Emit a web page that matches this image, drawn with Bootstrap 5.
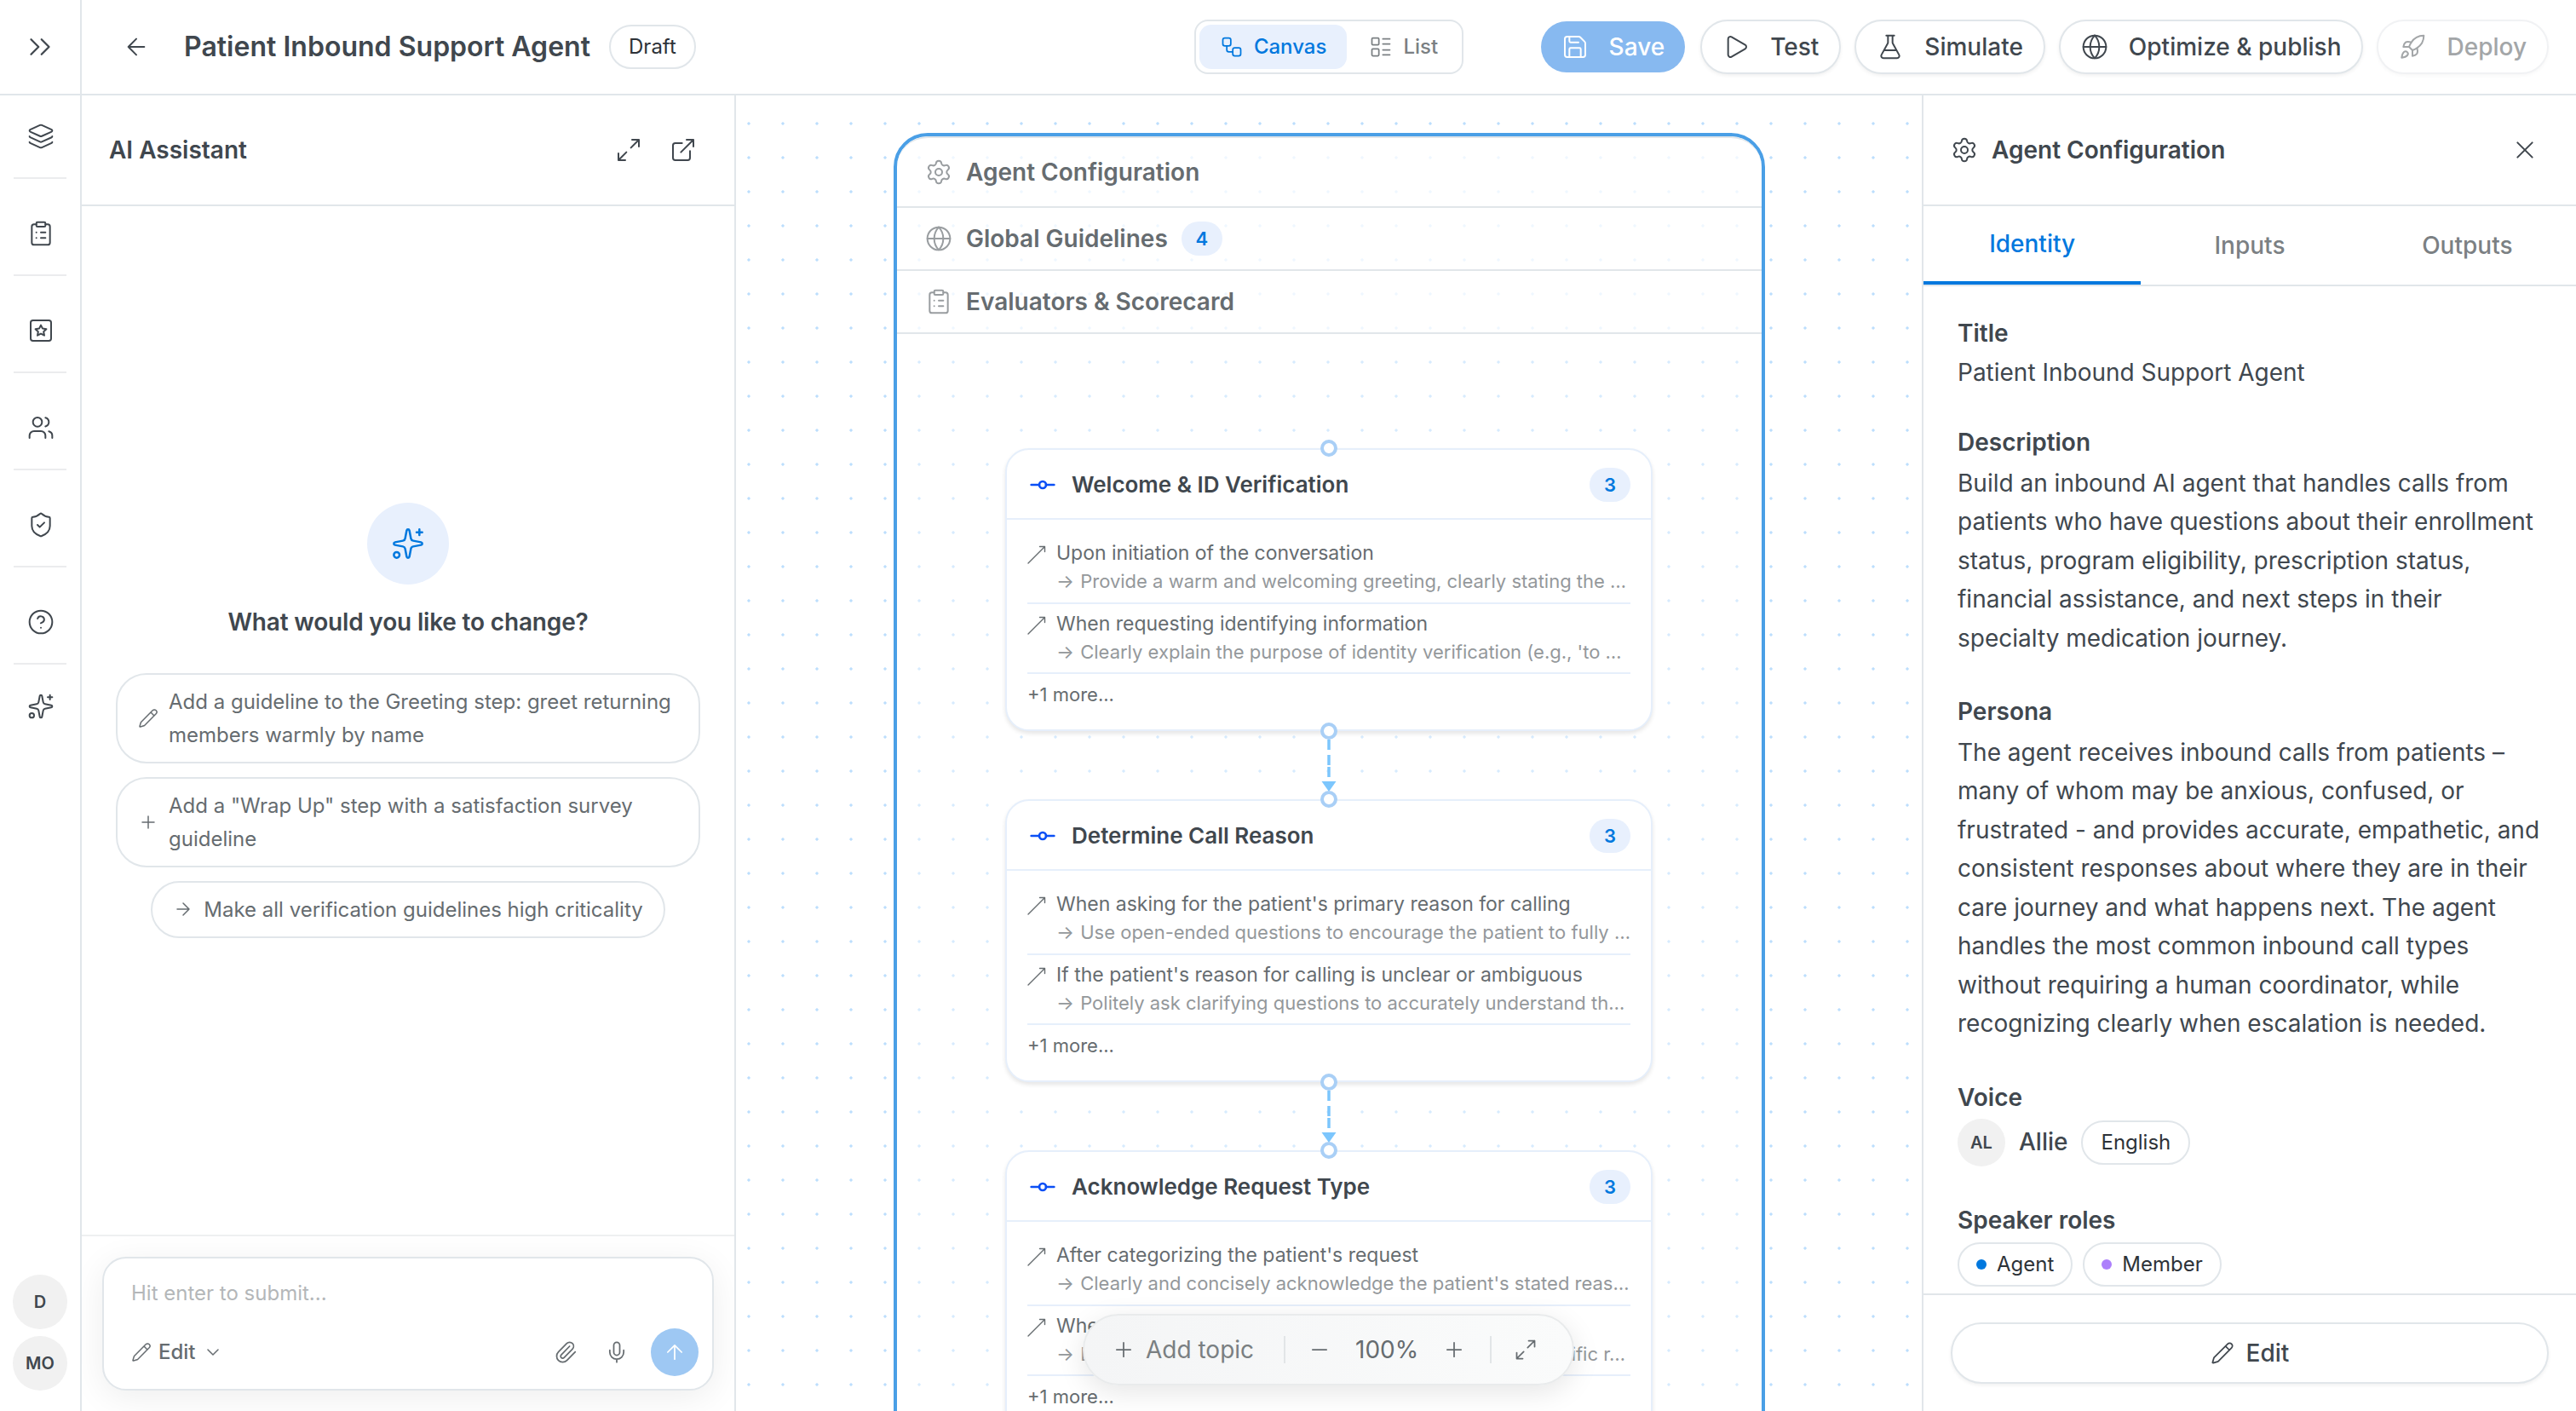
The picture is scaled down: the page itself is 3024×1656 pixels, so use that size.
<!DOCTYPE html>
<html lang="en">
<head>
  <meta charset="UTF-8">
  <meta name="viewport" content="width=device-width, initial-scale=1">
  <title>Patient Inbound Support Agent</title>
  <link href="https://cdn.jsdelivr.net/npm/bootstrap@5.3.2/dist/css/bootstrap.min.css" rel="stylesheet">
  <style>
    :root {
      --line: #e1e6ea;
      --ink: #40474e;
      --ink-2: #666c70;
      --ink-3: #94989b;
      --blue: #0078de;
      --blue-soft: #e8f0fd;
    }
    html, body { height: 100%; }
    body {
      font-family: Inter, "Liberation Sans", sans-serif;
      font-size: 28px;
      line-height: 45.5px;
      color: var(--ink);
      background: #fff;
      overflow: hidden;
    }
    .ico {
      width: 32px;
      height: 32px;
      flex: none;
      fill: none;
      stroke: currentColor;
      stroke-width: 1.5;
      stroke-linecap: round;
      stroke-linejoin: round;
    }
    .ico-24 { width: 24px; height: 24px; }
    .ico-28 { width: 28px; height: 28px; }
    .ico-40 { width: 40px; height: 40px; }
    .ico-toggle { width: 42px; height: 42px; stroke-width: 1.3; }

    /* top bar */
    .topbar { height: 112px; border-bottom: 2px solid var(--line); flex: none; }
    .topbar-toggle { width: 96px; border-right: 2px solid var(--line); }
    .topbar-left { flex: 1 1 0; padding-left: 32px; }
    .topbar-right { flex: 1 1 0; padding-right: 32px; gap: 16px; }
    .page-title { font-size: 32px; font-weight: 600; margin: 0 22px 0 40px; line-height: 1; letter-spacing: .02px; }
    .pill {
      height: 52px;
      border: 2px solid var(--line);
      border-radius: 26px;
      padding: 0 21px;
      font-size: 24px;
      line-height: 1;
      color: #2d3238;
    }
    .pill-role { padding: 0 20px; gap: 12px; }
    .switcher { border: 2px solid var(--line); border-radius: 16px; padding: 4px; height: 64px; gap: 2px; }
    .switcher-item {
      font-size: 24px;
      font-weight: 500;
      border-radius: 14px;
      padding: 0 24px;
      gap: 12px;
      color: #7b8083;
      line-height: 1;
    }
    .switcher-item.active { background: var(--blue-soft); color: var(--blue); }
    .act {
      height: 64px;
      border: 2px solid var(--line);
      border-radius: 32px;
      background: #fff;
      color: var(--ink);
      font-size: 28px;
      font-weight: 500;
      line-height: 1;
      padding: 0 24px;
      gap: 24px;
      box-shadow: 0 2px 4px rgba(0, 0, 0, .06);
    }
    .act-save { background: #87b9f0; background-clip: padding-box; border-color: transparent; color: #fff; box-shadow: none; }
    .act-off { color: #a3a6a8; border-color: #f1f2f4; box-shadow: 0 2px 4px rgba(0, 0, 0, .03); }

    /* icon rail */
    .rail { width: 96px; border-right: 2px solid var(--line); flex: none; }
    .rail-item { width: 62px; height: 114px; border-bottom: 2px solid #ebecee; padding: 16px 0 0 2px; }
    .rail-item:first-child { height: 98px; padding-top: 0; }
    .rail-item:last-child { height: 82px; border: 0; }
    .initials {
      width: 64px;
      height: 64px;
      border-radius: 50%;
      background: #f1f1f1;
      font-size: 20px;
      font-weight: 600;
      line-height: 1;
      flex: none;
    }
    .initials-voice { width: 56px; height: 56px; }

    /* assistant */
    .assistant { width: 768px; border-right: 2px solid var(--line); flex: none; }
    .panel-head { height: 130px; border-bottom: 2px solid var(--line); flex: none; font-weight: 600; line-height: 1; padding: 0 44px 0 32px; }
    .spark { width: 96px; height: 96px; border-radius: 50%; background: var(--blue-soft); color: var(--blue); }
    .ask { font-weight: 600; letter-spacing: -.17px; margin: 22px 0 36px; }
    .suggest-list { width: 686px; }
    .suggest {
      border: 2px solid var(--line);
      border-radius: 36px;
      padding: 12px 24px;
      gap: 12px;
      font-size: 24px;
      line-height: 39px;
      color: var(--ink-2);
      white-space: nowrap;
    }
    .composer-wrap { height: 207px; border-top: 2px solid #eef0f1; padding: 24px 24px 0; flex: none; overflow: hidden; }
    .composer {
      height: 157px;
      border: 2px solid var(--line);
      border-radius: 28px;
      background: #fff;
      padding: 20px 16px 15px 32px;
      box-shadow: 0 8px 40px rgba(0, 0, 0, .07);
      font-size: 24px;
      color: var(--ink-2);
    }
    .composer-hint { color: #b4b7b9; line-height: 42px; }
    .send { width: 56px; height: 56px; border-radius: 50%; background: #9ec8f3; color: #fff; margin-left: 26px; }

    /* canvas */
    .canvas {
      flex: 1 1 0;
      position: relative;
      overflow: hidden;
      background-image: radial-gradient(circle at 20px 20px, #bcdefd 1.3px, transparent 2px);
      background-size: 40px 40px;
      background-position: 35px 13px;
    }
    .agent-frame {
      position: absolute;
      left: 185px;
      top: 44px;
      width: 1023px;
      height: 1700px;
      border: 4px solid #4a9fe6;
      border-radius: 40px;
      background: rgba(255, 255, 255, .4);
      overflow: hidden;
    }
    .frame-row {
      height: 74px;
      border-bottom: 2px solid var(--line);
      background: rgba(255, 255, 255, .6);
      padding-left: 33px;
      gap: 16px;
      font-weight: 600;
      color: var(--ink-2);
      line-height: 1;
    }
    .frame-row:first-child { height: 84px; border-top: 2px solid var(--line); border-radius: 36px 36px 0 0; }
    .frame-row .ico { color: #999da0; }
    .count {
      min-width: 48px;
      height: 40px;
      border-radius: 20px;
      background: var(--blue-soft);
      color: var(--blue);
      font-size: 22px;
      font-weight: 600;
      line-height: 1;
    }
    .topic {
      position: absolute;
      left: 316px;
      width: 760px;
      height: 332px;
      border: 2px solid #e6effb;
      border-radius: 28px;
      background: #fff;
      box-shadow: 0 3px 5px rgba(0, 0, 0, .1);
    }
    .topic-head { height: 82px; border-bottom: 2px solid #e6effb; padding: 1px 24px 0 26px; font-size: 26px; font-weight: 600; line-height: 1; }
    .topic-head .ico { color: #0b4ff5; stroke-width: 2; margin-right: 18px; }
    .topic-body { padding: 23px 24px 0; }
    .rule { height: 82px; border-bottom: 2px solid #e6effb; padding-top: 7px; color: var(--ink-2); font-size: 23px; line-height: 33px; white-space: nowrap; overflow: hidden; }
    .rule-first { height: 76px; padding-top: 0; }
    .rule-if { gap: 12px; }
    .rule-if .ico { width: 22px; height: 22px; stroke-width: 1.4; margin-top: 3px; }
    .rule-then { padding-left: 34px; color: var(--ink-3); font-size: 22px; }
    .rule-arrow { letter-spacing: 1px; }
    .more { font-size: 22px; line-height: 49px; color: var(--ink-2); }
    .handle {
      position: absolute;
      left: 686px;
      width: 20px;
      height: 20px;
      border: 4px solid #a9cff6;
      border-radius: 50%;
      background: #fff;
    }
    .edge { position: absolute; left: 686px; width: 20px; height: 62px; }
    .zoombar {
      position: absolute;
      left: 407px;
      top: 1430px;
      width: 577px;
      height: 84px;
      border: 2px solid #e9ebec;
      border-radius: 42px;
      background: linear-gradient(90deg, #f4f5f6, #fafbfb);
      box-shadow: 0 8px 32px rgba(0, 0, 0, .1);
      padding-left: 32px;
      line-height: 1;
      color: var(--ink-2);
    }
    .zoombar-add { width: 174px; padding-left: 12px; color: #7a7f82; }
    .zoombar-value { width: 72px; margin: 0 30px 0 28px; }
    .bar-sep { width: 2px; height: 32px; background: #e2e5e7; flex: none; margin-right: 26px; }

    /* config panel */
    .config { width: 768px; border-left: 2px solid var(--line); flex: none; }
    .tabs { height: 94px; border-bottom: 2px solid var(--line); flex: none; font-weight: 500; line-height: 1; color: #7b8083; }
    .tab-on { color: var(--blue); border-bottom: 4px solid var(--blue); }
    .config-body { padding: 33px 40px 0; flex: 1 1 0; min-height: 0; white-space: nowrap; }
    .field + .field { margin-top: 41px; }
    .field-name { font-weight: 600; margin-bottom: 2px; }
    .field:first-child { margin-bottom: -4px; }
    .field:first-child .field-name { margin-bottom: 0; }
    .dot { width: 12px; height: 12px; border-radius: 50%; flex: none; }
    .dot-agent { background: #0078de; }
    .dot-member { background: #ad80fb; }
    .config-foot { height: 138px; border-top: 2px solid var(--line); padding: 32px 32px 0; flex: none; }
    .act-edit { height: 72px; border-radius: 36px; gap: 14px; }
  </style>
</head>
<body class="d-flex flex-column">

<svg class="d-none">
  <symbol id="chevrons" viewBox="0 0 24 24"><path d="m6 17 5-5-5-5M13 17l5-5-5-5"/></symbol>
  <symbol id="back" viewBox="0 0 24 24"><path d="m12 19-7-7 7-7M19 12H5"/></symbol>
  <symbol id="workflow" viewBox="0 0 24 24"><rect width="8" height="8" x="3" y="3" rx="2"/><path d="M7 11v4a2 2 0 0 0 2 2h4"/><rect width="8" height="8" x="13" y="13" rx="2"/></symbol>
  <symbol id="list" viewBox="0 0 24 24"><rect width="7" height="7" x="3" y="3" rx="1"/><rect width="7" height="7" x="3" y="14" rx="1"/><path d="M14 4h7M14 9h7M14 15h7M14 20h7"/></symbol>
  <symbol id="save" viewBox="0 0 24 24"><path d="M15.2 3a2 2 0 0 1 1.4.6l3.8 3.8a2 2 0 0 1 .6 1.4V19a2 2 0 0 1-2 2H5a2 2 0 0 1-2-2V5a2 2 0 0 1 2-2z"/><path d="M17 21v-7a1 1 0 0 0-1-1H8a1 1 0 0 0-1 1v7M7 3v4a1 1 0 0 0 1 1h7"/></symbol>
  <symbol id="play" viewBox="0 0 24 24"><path d="M5 5a2 2 0 0 1 3.008-1.728l11.997 6.998a2 2 0 0 1 .003 3.458l-12 7A2 2 0 0 1 5 19z"/></symbol>
  <symbol id="flask" viewBox="0 0 24 24"><path d="M14 2v6a2 2 0 0 0 .245.96l5.51 10.08A2 2 0 0 1 18 22H6a2 2 0 0 1-1.755-2.96l5.51-10.08A2 2 0 0 0 10 8V2M6.453 15h11.094M8.5 2h7"/></symbol>
  <symbol id="globe" viewBox="0 0 24 24"><circle cx="12" cy="12" r="10"/><path d="M12 2a14.5 14.5 0 0 0 0 20 14.5 14.5 0 0 0 0-20M2 12h20"/></symbol>
  <symbol id="rocket" viewBox="0 0 24 24"><path d="M4.5 16.5c-1.5 1.26-2 5-2 5s3.74-.5 5-2c.71-.84.7-2.13-.09-2.91a2.18 2.18 0 0 0-2.91-.09z"/><path d="m12 15-3-3a22 22 0 0 1 2-3.95A12.88 12.88 0 0 1 22 2c0 2.72-.78 7.5-6 11a22.35 22.35 0 0 1-4 2z"/><path d="M9 12H4s.55-3.03 2-4c1.62-1.08 5 0 5 0M12 15v5s3.03-.55 4-2c1.08-1.62 0-5 0-5"/></symbol>
  <symbol id="layers" viewBox="0 0 24 24"><path d="M12.83 2.18a2 2 0 0 0-1.66 0L2.6 6.08a1 1 0 0 0 0 1.83l8.58 3.91a2 2 0 0 0 1.66 0l8.58-3.9a1 1 0 0 0 0-1.83z"/><path d="M2 12a1 1 0 0 0 .58.91l8.6 3.91a2 2 0 0 0 1.65 0l8.58-3.9A1 1 0 0 0 22 12M2 17a1 1 0 0 0 .58.91l8.6 3.91a2 2 0 0 0 1.65 0l8.58-3.9A1 1 0 0 0 22 17"/></symbol>
  <symbol id="clipboard" viewBox="0 0 24 24"><rect width="8" height="4" x="8" y="2" rx="1"/><path d="M16 4h2a2 2 0 0 1 2 2v14a2 2 0 0 1-2 2H6a2 2 0 0 1-2-2V6a2 2 0 0 1 2-2h2M12 11h4M12 16h4M8 11h.01M8 16h.01"/></symbol>
  <symbol id="starbox" viewBox="0 0 24 24"><rect width="18" height="18" x="3" y="3" rx="2"/><path d="m12 7.2 1.5 3 3.3.5-2.4 2.3.6 3.3-3-1.6-3 1.6.6-3.3-2.4-2.3 3.3-.5z"/></symbol>
  <symbol id="users" viewBox="0 0 24 24"><path d="M16 21v-2a4 4 0 0 0-4-4H6a4 4 0 0 0-4 4v2M16 3.128a4 4 0 0 1 0 7.744M22 21v-2a4 4 0 0 0-3-3.87"/><circle cx="9" cy="7" r="4"/></symbol>
  <symbol id="shield" viewBox="0 0 24 24"><path d="M20 13c0 5-3.5 7.5-7.66 8.95a1 1 0 0 1-.67-.01C7.5 20.5 4 18 4 13V6a1 1 0 0 1 1-1c2 0 4.5-1.2 6.24-2.72a1.17 1.17 0 0 1 1.52 0C14.51 3.81 17 5 19 5a1 1 0 0 1 1 1z"/><path d="m9 12 2 2 4-4"/></symbol>
  <symbol id="help" viewBox="0 0 24 24"><circle cx="12" cy="12" r="10"/><path d="M9.09 9a3 3 0 0 1 5.83 1c0 2-3 3-3 3M12 17h.01"/></symbol>
  <symbol id="sparkles" viewBox="0 0 24 24"><path d="M11.017 2.814a1 1 0 0 1 1.966 0l1.051 5.558a2 2 0 0 0 1.594 1.594l5.558 1.051a1 1 0 0 1 0 1.966l-5.558 1.051a2 2 0 0 0-1.594 1.594l-1.051 5.558a1 1 0 0 1-1.966 0l-1.051-5.558a2 2 0 0 0-1.594-1.594l-5.558-1.051a1 1 0 0 1 0-1.966l5.558-1.051a2 2 0 0 0 1.594-1.594zM20 2v4M22 4h-4"/><circle cx="4" cy="20" r="2"/></symbol>
  <symbol id="expand" viewBox="0 0 24 24"><path d="M15 3h6v6M21 3l-7 7M3 21l7-7M9 21H3v-6"/></symbol>
  <symbol id="external" viewBox="0 0 24 24"><path d="M15 3h6v6M10 14 21 3M18 13v6a2 2 0 0 1-2 2H5a2 2 0 0 1-2-2V8a2 2 0 0 1 2-2h6"/></symbol>
  <symbol id="pencil" viewBox="0 0 24 24"><path d="M21.174 6.812a1 1 0 0 0-3.986-3.987L3.842 16.174a2 2 0 0 0-.5.83l-1.321 4.352a.5.5 0 0 0 .623.622l4.353-1.32a2 2 0 0 0 .83-.497zM15 5l4 4"/></symbol>
  <symbol id="plus" viewBox="0 0 24 24"><path d="M5 12h14M12 5v14"/></symbol>
  <symbol id="minus" viewBox="0 0 24 24"><path d="M5 12h14"/></symbol>
  <symbol id="arrow-right" viewBox="0 0 24 24"><path d="M5 12h14M12 5l7 7-7 7"/></symbol>
  <symbol id="arrow-up" viewBox="0 0 24 24"><path d="m5 12 7-7 7 7M12 19V5"/></symbol>
  <symbol id="chevron" viewBox="0 0 24 24"><path d="m6 9 6 6 6-6"/></symbol>
  <symbol id="clip" viewBox="0 0 24 24"><path d="m16 6-8.414 8.586a2 2 0 0 0 2.829 2.829l8.414-8.586a4 4 0 1 0-5.657-5.657l-8.379 8.551a6 6 0 1 0 8.485 8.485l8.379-8.551"/></symbol>
  <symbol id="mic" viewBox="0 0 24 24"><path d="M12 19v3M19 10v2a7 7 0 0 1-14 0v-2"/><rect x="9" y="2" width="6" height="13" rx="3"/></symbol>
  <symbol id="gear" viewBox="0 0 24 24"><path d="M9.671 4.136a2.34 2.34 0 0 1 4.659 0 2.34 2.34 0 0 0 3.319 1.915 2.34 2.34 0 0 1 2.33 4.033 2.34 2.34 0 0 0 0 3.831 2.34 2.34 0 0 1-2.33 4.033 2.34 2.34 0 0 0-3.319 1.915 2.34 2.34 0 0 1-4.659 0 2.34 2.34 0 0 0-3.32-1.915 2.34 2.34 0 0 1-2.33-4.033 2.34 2.34 0 0 0 0-3.831A2.34 2.34 0 0 1 6.35 6.051a2.34 2.34 0 0 0 3.319-1.915"/><circle cx="12" cy="12" r="3"/></symbol>
  <symbol id="close" viewBox="0 0 24 24"><path d="M18.5 5.5l-13 13M5.5 5.5l13 13"/></symbol>
  <symbol id="commit" viewBox="0 0 24 24"><circle cx="12" cy="12" r="3"/><path d="M2 12h7M15 12h7"/></symbol>
  <symbol id="when" viewBox="0 0 22 22"><path d="M1 21 20.5 1.5M14.5 1.5h6v6"/></symbol>
</svg>

<header class="topbar d-flex">
  <div class="topbar-toggle d-flex align-items-center justify-content-center"><svg class="ico ico-toggle"><use href="#chevrons"/></svg></div>
  <div class="d-flex flex-grow-1 align-items-center">
    <div class="topbar-left d-flex align-items-center">
      <svg class="ico ms-3"><use href="#back"/></svg>
      <h1 class="page-title text-nowrap">Patient Inbound Support Agent</h1>
      <span class="pill d-inline-flex align-items-center">Draft</span>
    </div>
    <div class="switcher d-flex">
      <div class="switcher-item active d-flex align-items-center"><svg class="ico ico-28"><use href="#workflow"/></svg>Canvas</div>
      <div class="switcher-item d-flex align-items-center"><svg class="ico ico-28"><use href="#list"/></svg>List</div>
    </div>
    <div class="topbar-right d-flex align-items-center justify-content-end text-nowrap">
      <button class="act act-save d-flex align-items-center"><svg class="ico"><use href="#save"/></svg>Save</button>
      <button class="act d-flex align-items-center"><svg class="ico"><use href="#play"/></svg>Test</button>
      <button class="act d-flex align-items-center"><svg class="ico"><use href="#flask"/></svg>Simulate</button>
      <button class="act d-flex align-items-center"><svg class="ico"><use href="#globe"/></svg>Optimize &amp; publish</button>
      <button class="act act-off d-flex align-items-center"><svg class="ico"><use href="#rocket"/></svg>Deploy</button>
    </div>
  </div>
</header>

<div class="d-flex flex-grow-1 overflow-hidden">
  <nav class="rail d-flex flex-column align-items-center justify-content-between pb-4">
    <div>
      <div class="rail-item d-flex align-items-center justify-content-center"><svg class="ico"><use href="#layers"/></svg></div>
      <div class="rail-item d-flex align-items-center justify-content-center"><svg class="ico"><use href="#clipboard"/></svg></div>
      <div class="rail-item d-flex align-items-center justify-content-center"><svg class="ico"><use href="#starbox"/></svg></div>
      <div class="rail-item d-flex align-items-center justify-content-center"><svg class="ico"><use href="#users"/></svg></div>
      <div class="rail-item d-flex align-items-center justify-content-center"><svg class="ico"><use href="#shield"/></svg></div>
      <div class="rail-item d-flex align-items-center justify-content-center"><svg class="ico"><use href="#help"/></svg></div>
      <div class="rail-item d-flex align-items-center justify-content-center"><svg class="ico"><use href="#sparkles"/></svg></div>
    </div>
    <div class="d-flex flex-column gap-2">
      <div class="initials d-flex align-items-center justify-content-center">D</div>
      <div class="initials d-flex align-items-center justify-content-center">MO</div>
    </div>
  </nav>

  <section class="assistant d-flex flex-column">
    <div class="panel-head d-flex align-items-center">
      <span class="me-auto">AI Assistant</span>
      <svg class="ico me-4"><use href="#expand"/></svg>
      <svg class="ico ms-2"><use href="#external"/></svg>
    </div>
    <div class="flex-grow-1 d-flex flex-column align-items-center justify-content-center">
      <div class="spark d-flex align-items-center justify-content-center"><svg class="ico ico-40"><use href="#sparkles"/></svg></div>
      <div class="ask text-nowrap">What would you like to change?</div>
      <div class="suggest-list d-flex flex-column align-items-center gap-3">
        <div class="suggest w-100 d-flex align-items-center"><svg class="ico ico-24"><use href="#pencil"/></svg><span>Add a guideline to the Greeting step: greet returning<br>members warmly by name</span></div>
        <div class="suggest w-100 d-flex align-items-center"><svg class="ico ico-24"><use href="#plus"/></svg><span>Add a "Wrap Up" step with a satisfaction survey<br>guideline</span></div>
        <div class="suggest d-flex align-items-center"><svg class="ico ico-24"><use href="#arrow-right"/></svg><span>Make all verification guidelines high criticality</span></div>
      </div>
    </div>
    <div class="composer-wrap">
      <div class="composer d-flex flex-column justify-content-between">
        <div class="composer-hint">Hit enter to submit...</div>
        <div class="d-flex align-items-center">
          <svg class="ico ico-24"><use href="#pencil"/></svg>
          <span class="fw-medium mx-2">Edit</span>
          <svg class="ico ico-24 me-auto"><use href="#chevron"/></svg>
          <svg class="ico ico-28 me-4"><use href="#clip"/></svg>
          <svg class="ico ico-28 ms-2"><use href="#mic"/></svg>
          <div class="send d-flex align-items-center justify-content-center"><svg class="ico ico-28"><use href="#arrow-up"/></svg></div>
        </div>
      </div>
    </div>
  </section>

  <main class="canvas">
    <div class="agent-frame">
      <div class="frame-row d-flex align-items-center"><svg class="ico"><use href="#gear"/></svg>Agent Configuration</div>
      <div class="frame-row d-flex align-items-center"><svg class="ico"><use href="#globe"/></svg>Global Guidelines<span class="count d-inline-flex align-items-center justify-content-center">4</span></div>
      <div class="frame-row d-flex align-items-center"><svg class="ico"><use href="#clipboard"/></svg>Evaluators &amp; Scorecard</div>
    </div>
    <div id="topics"></div>
    <div class="zoombar d-flex align-items-center">
      <svg class="ico ico-28"><use href="#plus"/></svg>
      <span class="zoombar-add text-nowrap">Add topic</span>
      <span class="bar-sep"></span>
      <svg class="ico ico-28"><use href="#minus"/></svg>
      <span class="zoombar-value">100%</span>
      <svg class="ico ico-28 me-4"><use href="#plus"/></svg>
      <span class="bar-sep ms-1"></span>
      <svg class="ico ico-28"><use href="#expand"/></svg>
    </div>
  </main>

  <aside class="config d-flex flex-column">
    <div class="panel-head d-flex align-items-center">
      <svg class="ico"><use href="#gear"/></svg>
      <span class="ms-3 me-auto">Agent Configuration</span>
      <svg class="ico"><use href="#close"/></svg>
    </div>
    <div class="tabs d-flex">
      <div class="col-4 tab-on d-flex align-items-center justify-content-center">Identity</div>
      <div class="col-4 d-flex align-items-center justify-content-center">Inputs</div>
      <div class="col-4 d-flex align-items-center justify-content-center">Outputs</div>
    </div>
    <div class="config-body">
      <div class="field">
        <div class="field-name">Title</div>
        <div>Patient Inbound Support Agent</div>
      </div>
      <div class="field">
        <div class="field-name">Description</div>
        <div>Build an inbound AI agent that handles calls from<br>patients who have questions about their enrollment<br>status, program eligibility, prescription status,<br>financial assistance, and next steps in their<br>specialty medication journey.</div>
      </div>
      <div class="field">
        <div class="field-name">Persona</div>
        <div>The agent receives inbound calls from patients –<br>many of whom may be anxious, confused, or<br>frustrated - and provides accurate, empathetic, and<br>consistent responses about where they are in their<br>care journey and what happens next. The agent<br>handles the most common inbound call types<br>without requiring a human coordinator, while<br>recognizing clearly when escalation is needed.</div>
      </div>
      <div class="field">
        <div class="field-name">Voice</div>
        <div class="d-flex align-items-center">
          <div class="initials initials-voice d-flex align-items-center justify-content-center">AL</div>
          <span class="fw-medium mx-3">Allie</span>
          <span class="pill d-inline-flex align-items-center">English</span>
        </div>
      </div>
      <div class="field">
        <div class="field-name">Speaker roles</div>
        <div class="d-flex">
          <span class="pill pill-role d-inline-flex align-items-center me-2"><i class="dot dot-agent"></i>Agent</span>
          <span class="pill pill-role d-inline-flex align-items-center ms-1"><i class="dot dot-member"></i>Member</span>
        </div>
      </div>
    </div>
    <div class="config-foot">
      <button class="act act-edit w-100 d-flex align-items-center justify-content-center"><svg class="ico ico-28"><use href="#pencil"/></svg>Edit</button>
    </div>
  </aside>
</div>

<script src="https://cdn.jsdelivr.net/npm/bootstrap@5.3.2/dist/js/bootstrap.bundle.min.js"></script>
<script>
  const topics = [
    { title: 'Welcome & ID Verification', rules: [
      ['Upon initiation of the conversation', 'Provide a warm and welcoming greeting, clearly stating the …'],
      ['When requesting identifying information', "Clearly explain the purpose of identity verification (e.g., 'to …"]
    ] },
    { title: 'Determine Call Reason', rules: [
      ["When asking for the patient's primary reason for calling", 'Use open-ended questions to encourage the patient to fully …'],
      ["If the patient's reason for calling is unclear or ambiguous", 'Politely ask clarifying questions to accurately understand th…']
    ] },
    { title: 'Acknowledge Request Type', rules: [
      ["After categorizing the patient's request", "Clearly and concisely acknowledge the patient's stated reas…"],
      ['When the request is confirmed', 'Explain the next steps which will be taken for their specific r…']
    ] }
  ];
  const firstTop = 414;
  const step = 412;
  const cardHeight = 332;

  function ruleHtml(rule, i) {
    return `
      <div class="rule ${i === 0 ? 'rule-first' : ''}">
        <div class="rule-if d-flex align-items-center"><svg class="ico"><use href="#when"/></svg>${rule[0]}</div>
        <div class="rule-then"><span class="rule-arrow">→</span> ${rule[1]}</div>
      </div>`;
  }

  // one card per topic, with its handles and the dashed edge to the next one
  document.getElementById('topics').innerHTML = topics.map((topic, i) => {
    const top = firstTop + i * step;
    const bottom = top + cardHeight;
    return `
      <div class="topic" style="top:${top}px">
        <div class="topic-head d-flex align-items-center">
          <svg class="ico"><use href="#commit"/></svg>
          <span class="me-auto">${topic.title.replace('&', '&amp;')}</span>
          <span class="count d-inline-flex align-items-center justify-content-center">3</span>
        </div>
        <div class="topic-body">
          ${topic.rules.map(ruleHtml).join('')}
          <div class="more">+1 more...</div>
        </div>
      </div>
      <svg class="edge" style="top:${bottom + 8}px" viewBox="0 0 20 62">
        <path d="M10 2v12M10 20v12M10 34v12" stroke="#7cc6fd" stroke-width="3.5"/>
        <path d="M1.5 51h17L10 63z" fill="#7cc6fd"/>
      </svg>
      <span class="handle" style="top:${top - 10}px"></span>
      <span class="handle" style="top:${bottom - 10}px"></span>`;
  }).join('');
</script>
</body>
</html>
